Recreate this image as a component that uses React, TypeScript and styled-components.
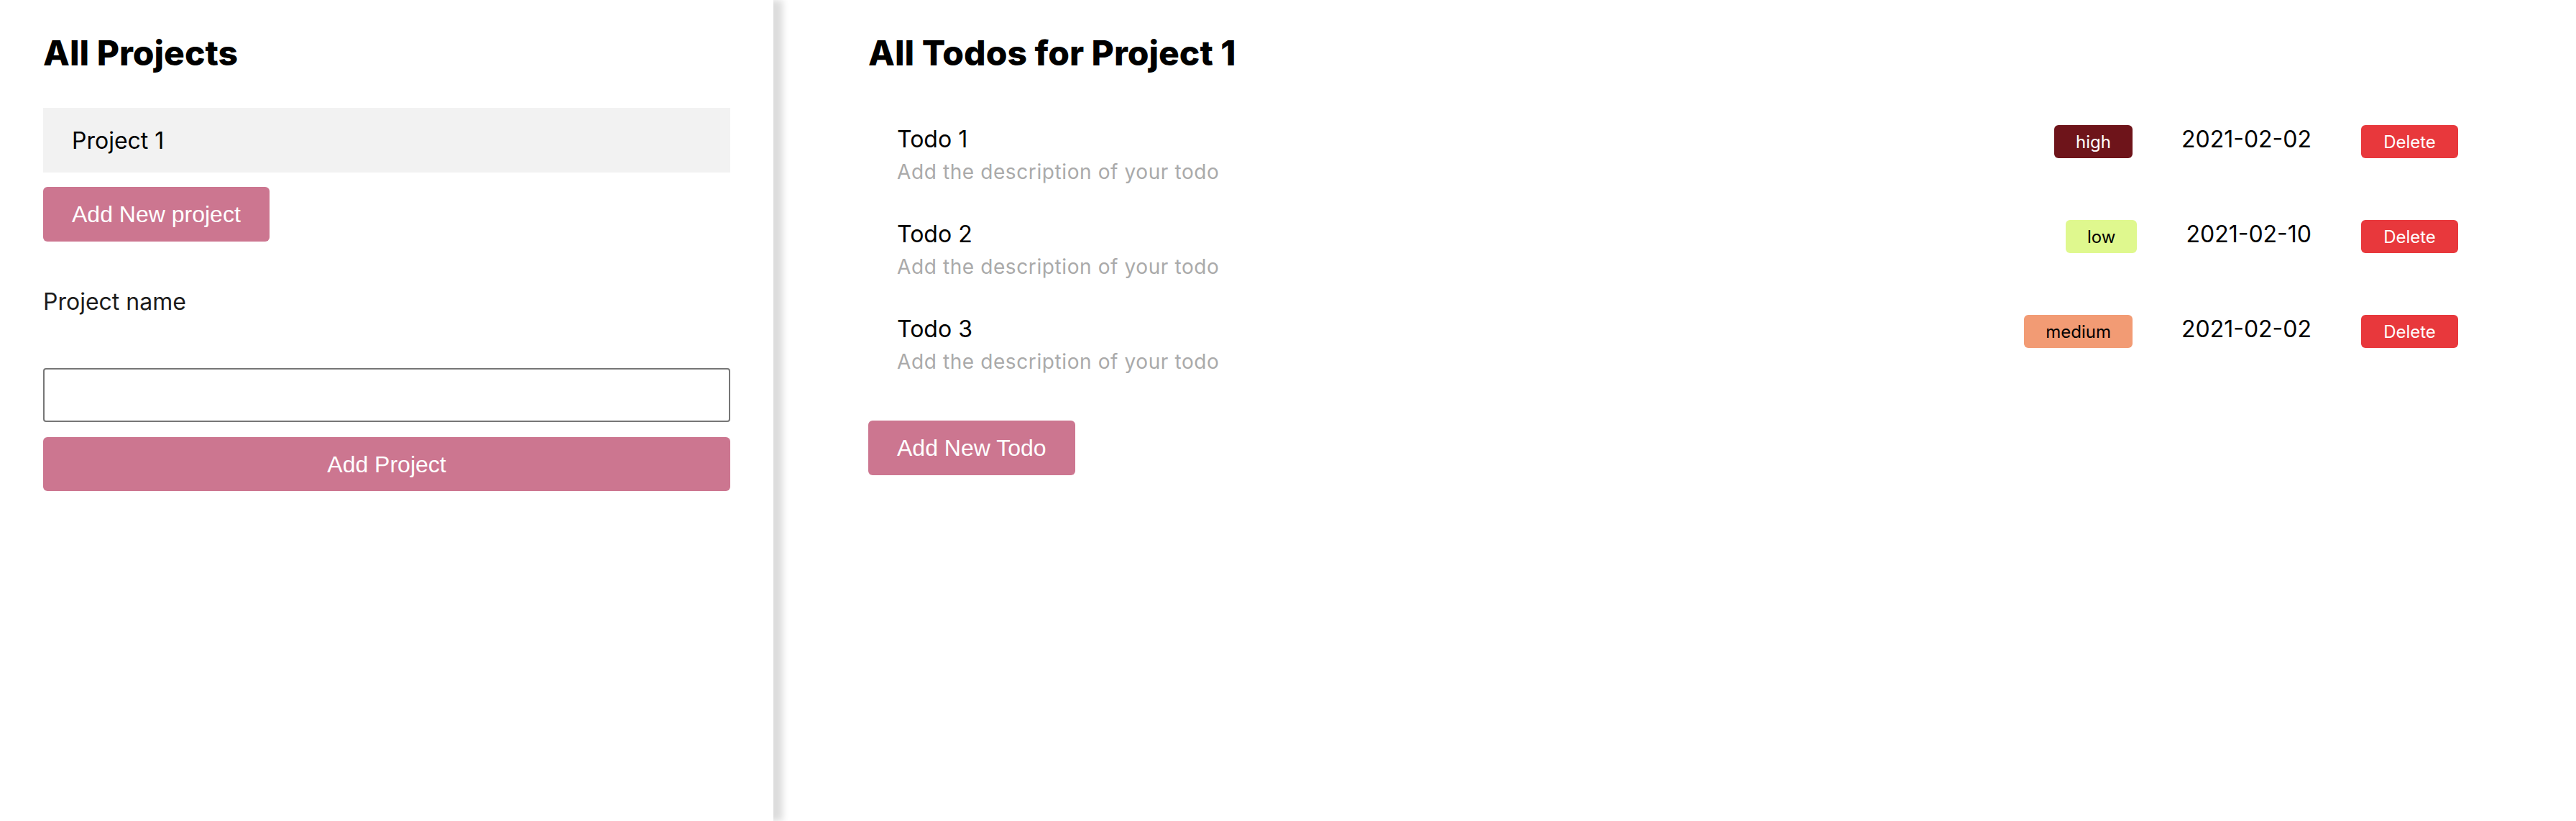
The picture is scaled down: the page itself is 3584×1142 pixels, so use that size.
import React from "react";
import styled, { createGlobalStyle } from "styled-components";

const GlobalStyle = createGlobalStyle`
  html, body {
    margin: 0;
    padding: 0;
    background: #ffffff;
  }
  body {
    font-family: Inter, "Open Sans", sans-serif;
    color: #000;
  }
  * { box-sizing: border-box; }
`;

const Layout = styled.div`
  display: flex;
  min-height: 100vh;
  width: 100%;
`;

const Sidebar = styled.aside`
  position: relative;
  z-index: 1;
  flex: 0 0 1076px;
  width: 1076px;
  min-height: 100vh;
  background: #ffffff;
  padding: 45px 60px 0 60px;
  display: flex;
  flex-direction: column;
  box-shadow: 13px 0 9px #dddddd;
`;

const Main = styled.main`
  flex: 1;
  min-width: 0;
  padding: 45px 124px 0 132px;
  display: flex;
  flex-direction: column;
  align-items: stretch;
`;

const Heading = styled.h1`
  margin: 0;
  font-size: 48px;
  line-height: 58px;
  font-weight: 800;
  letter-spacing: 0;
  color: #000;
`;

const ProjectItem = styled.div`
  margin-top: 47px;
  height: 90px;
  background: #f2f2f2;
  padding: 0 40px;
  display: flex;
  align-items: center;
  font-size: 32px;
  color: #000;
`;

const PinkButton = styled.button<{ $full?: boolean; $mt: number }>`
  margin-top: ${(p) => p.$mt}px;
  align-self: ${(p) => (p.$full ? "stretch" : "flex-start")};
  height: ${(p) => (p.$full ? 75 : 76)}px;
  padding: 0 40px;
  border: none;
  border-radius: 6px;
  background: #cc7690;
  color: #ffffff;
  font-family: "Liberation Sans", Arial, sans-serif;
  font-size: 32px;
  line-height: 1;
  cursor: pointer;
`;

const Label = styled.label`
  margin-top: 60px;
  font-size: 32px;
  line-height: 48px;
  color: #1c1c1c;
`;

const TextInput = styled.input`
  margin-top: 68px;
  height: 75px;
  width: 100%;
  border: 2px solid #767676;
  border-radius: 4px;
  padding: 0 12px;
  font-size: 28px;
  font-family: Inter, sans-serif;
  background: #fff;
`;

const TodoList = styled.div`
  margin-top: 67px;
  display: flex;
  flex-direction: column;
  gap: 42px;
`;

const TodoRow = styled.div`
  display: flex;
  align-items: flex-start;
  padding: 0 40px;
`;

const TodoText = styled.div`
  flex: 1;
  display: flex;
  flex-direction: column;
`;

const TodoTitle = styled.div`
  font-size: 32px;
  line-height: 48px;
  color: #000;
`;

const TodoDesc = styled.div`
  font-size: 28px;
  line-height: 42px;
  letter-spacing: 0.6px;
  color: #aaaaaa;
`;

const priorityColors: Record<string, { bg: string; fg: string }> = {
  high: { bg: "#6e141a", fg: "#ffffff" },
  low: { bg: "#dff88e", fg: "#000000" },
  medium: { bg: "#f29b74", fg: "#000000" },
};

const Badge = styled.span<{ $level: string }>`
  margin-top: 4px;
  height: 46px;
  padding: 0 30px;
  display: inline-flex;
  align-items: center;
  border-radius: 6px;
  font-size: 24px;
  background: ${(p) => priorityColors[p.$level].bg};
  color: ${(p) => priorityColors[p.$level].fg};
`;

const DueDate = styled.span`
  margin-left: 68px;
  font-size: 32px;
  line-height: 48px;
  color: #000;
`;

const DeleteButton = styled.button`
  margin-top: 4px;
  margin-left: 69px;
  height: 46px;
  width: 135px;
  border: none;
  border-radius: 6px;
  background: #e8383c;
  color: #ffffff;
  font-family: Inter, sans-serif;
  font-size: 24px;
  cursor: pointer;
`;

const todos = [
  { title: "Todo 1", priority: "high", date: "2021-02-02" },
  { title: "Todo 2", priority: "low", date: "2021-02-10" },
  { title: "Todo 3", priority: "medium", date: "2021-02-02" },
];

export default function App() {
  return (
    <>
      <GlobalStyle />
      <Layout>
        <Sidebar>
          <Heading>All Projects</Heading>
          <ProjectItem>Project 1</ProjectItem>
          <PinkButton $mt={20}>Add New project</PinkButton>
          <Label htmlFor="project-name">Project name</Label>
          <TextInput id="project-name" type="text" />
          <PinkButton $full $mt={21}>Add Project</PinkButton>
        </Sidebar>
        <Main>
          <Heading>All Todos for Project 1</Heading>
          <TodoList>
            {todos.map((t) => (
              <TodoRow key={t.title}>
                <TodoText>
                  <TodoTitle>{t.title}</TodoTitle>
                  <TodoDesc>Add the description of your todo</TodoDesc>
                </TodoText>
                <Badge $level={t.priority}>{t.priority}</Badge>
                <DueDate>{t.date}</DueDate>
                <DeleteButton>Delete</DeleteButton>
              </TodoRow>
            ))}
          </TodoList>
          <PinkButton $mt={61}>Add New Todo</PinkButton>
        </Main>
      </Layout>
    </>
  );
}
